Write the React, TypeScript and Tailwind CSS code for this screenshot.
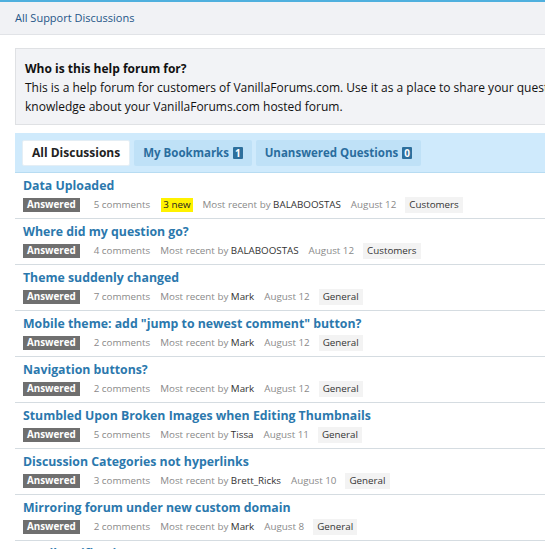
import React from "react";

const rows = [
  { title: "Data Uploaded", comments: 5, fresh: "3 new", by: "BALABOOSTAS", date: "August 12", cat: "Customers" },
  { title: "Where did my question go?", comments: 4, by: "BALABOOSTAS", date: "August 12", cat: "Customers" },
  { title: "Theme suddenly changed", comments: 7, by: "Mark", date: "August 12", cat: "General" },
  { title: 'Mobile theme: add "jump to newest comment" button?', comments: 2, by: "Mark", date: "August 12", cat: "General" },
  { title: "Navigation buttons?", comments: 2, by: "Mark", date: "August 12", cat: "General" },
  { title: "Stumbled Upon Broken Images when Editing Thumbnails", comments: 5, by: "Tissa", date: "August 11", cat: "General" },
  { title: "Discussion Categories not hyperlinks", comments: 3, by: "Brett_Ricks", date: "August 10", cat: "General" },
  { title: "Mirroring forum under new custom domain", comments: 2, by: "Mark", date: "August 8", cat: "General" },
  { title: "Email notifications", comments: 3, by: "Mark", date: "August 8", cat: "General" },
];

export default function App() {
  return (
    <div className="w-[545px] h-[549px] overflow-hidden bg-white font-['Open_Sans',sans-serif]">
      {/* top bar */}
      <div className="h-[2px] bg-[#4fb0de]" />
      <div className="h-[33px] bg-[#f1f2f5] border-b border-[#e1e3e7] flex items-center pl-[15px]">
        <span className="text-[11px] text-[#1f5688]">All Support Discussions</span>
      </div>

      <div className="ml-[15px] w-[700px] pt-[13px]">
        {/* info box */}
        <div className="bg-[#f2f3f6] border border-[#dfe1e4] px-[9px] pt-[10px] pb-[8px] text-[12px] leading-[19px] text-[#111] whitespace-nowrap">
          <p className="font-bold">Who is this help forum for?</p>
          <p>
            This is a help forum for customers of VanillaForums.com. Use it as a place to share your questions and
            <br />
            knowledge about your VanillaForums.com hosted forum.
          </p>
        </div>

        {/* tabs */}
        <div className="mt-[8px] h-[40px] bg-[#cfeafc] border-b border-[#b7dcf2] flex items-center gap-[4px] pl-[7px]">
          <div className="h-[26px] px-[9px] flex items-center bg-white border border-[#e4eef5] rounded-[2px] text-[12px] font-bold text-[#222]">
            All Discussions
          </div>
          <div className="h-[26px] px-[9px] flex items-center gap-[4px] bg-[#bfe1f7] rounded-[2px] text-[11.5px] font-bold text-[#2a6d9e]">
            My Bookmarks
            <span className="bg-[#2d6f9c] text-white text-[10px] leading-[12px] px-[2px] rounded-[1px]">1</span>
          </div>
          <div className="h-[26px] px-[9px] flex items-center gap-[4px] bg-[#bfe1f7] rounded-[2px] text-[11.5px] font-bold text-[#2a6d9e]">
            Unanswered Questions
            <span className="bg-[#2d6f9c] text-white text-[10px] leading-[12px] px-[2px] rounded-[1px]">0</span>
          </div>
        </div>

        {/* discussions */}
        {rows.map((r) => (
          <div key={r.title} className="pl-[8px] pt-[5px] pb-[5px] border-b border-[#d5dce1]">
            <div className="text-[12.3px] leading-[16px] font-bold text-[#2b78ad]">{r.title}</div>
            <div className="mt-[3px] h-[16px] flex items-center text-[9.8px] text-[#8a8a8a]">
              <span className="bg-[#6f6f6f] text-white font-bold px-[4px] leading-[14px]">Answered</span>
              <span className="ml-[14px]">{r.comments} comments</span>
              {r.fresh && (
                <span className="ml-[11px] bg-[#fff200] text-[#222] px-[2px] leading-[14px]">{r.fresh}</span>
              )}
              <span className="ml-[10px]">
                Most recent by <span className="text-[#333]">{r.by}</span>
              </span>
              <span className="ml-[10px]">{r.date}</span>
              <span className="ml-[9px] bg-[#f3f3f3] text-[#333] px-[4px] leading-[16px]">{r.cat}</span>
            </div>
          </div>
        ))}
      </div>
    </div>
  );
}
